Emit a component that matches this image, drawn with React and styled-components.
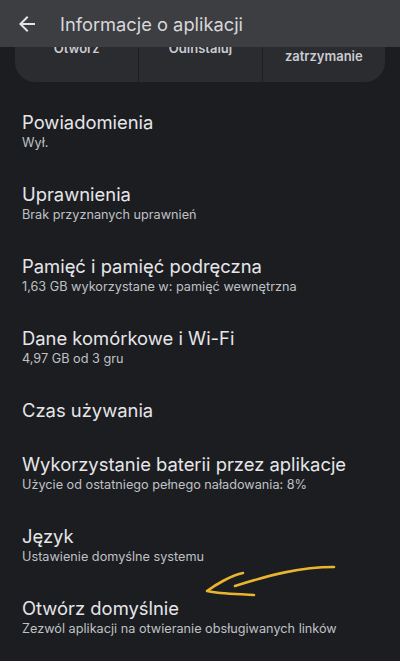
import React, { useLayoutEffect, useRef } from "react";
import styled, { createGlobalStyle } from "styled-components";

const GlobalStyle = createGlobalStyle`
  html, body {
    margin: 0;
    padding: 0;
    background: #1c1d21;
  }
  body {
    font-family: Inter, "Noto Sans", sans-serif;
    -webkit-font-smoothing: antialiased;
  }
`;

const Screen = styled.div`
  width: 400px;
  height: 661px;
  display: flex;
  flex-direction: column;
  background: #1c1d21;
  position: relative;
  overflow: hidden;
`;

const Toolbar = styled.header`
  height: 47px;
  flex: none;
  display: flex;
  align-items: center;
  gap: 21px;
  padding: 0 15px;
  background: #3d3e42;
  color: #dcdcde;
  z-index: 1;
`;

const BackButton = styled.button`
  width: 24px;
  height: 24px;
  padding: 0;
  border: 0;
  background: none;
  color: #e4e4e6;
  display: flex;
  align-items: center;
  justify-content: center;
`;

const Title = styled.h1`
  margin: 0;
  font-size: 18.3px;
  font-weight: 400;
  color: #d8d8da;
`;

const Scroller = styled.div`
  flex: 1;
  overflow: hidden;
`;

const ActionCard = styled.div`
  margin: 8px 15px 13px;
  height: 110px;
  border-radius: 20px;
  background: #2b2c30;
  display: grid;
  grid-template-columns: 1fr 1fr 1fr;
  overflow: hidden;
`;

const Action = styled.div`
  display: flex;
  flex-direction: column;
  align-items: center;
  padding: 14px 6px 0;
  border-left: ${(p) => (p.$first ? "none" : "1px solid #1e1f23")};
  color: #c9cbd0;
`;

const ActionLabel = styled.div`
  flex: 1;
  margin-top: 4px;
  display: flex;
  align-items: center;
  justify-content: center;
  text-align: center;
  white-space: pre-line;
  font-size: 13px;
  line-height: 17px;
  font-weight: 600;
`;

const List = styled.div`
  display: flex;
  flex-direction: column;
`;

const Item = styled.div`
  padding: 15px 22px;
  display: flex;
  flex-direction: column;
`;

const ItemTitle = styled.div`
  font-size: 18.4px;
  line-height: 24px;
  color: #e6e6e8;
`;

const ItemSub = styled.div`
  font-size: 12.7px;
  line-height: 18px;
  color: #bfc1c5;
`;

const Scribble = styled.svg`
  position: absolute;
  left: 0;
  top: 0;
  pointer-events: none;
`;

const items = [
  ["Powiadomienia", "Wył."],
  ["Uprawnienia", "Brak przyznanych uprawnień"],
  ["Pamięć i pamięć podręczna", "1,63 GB wykorzystane w: pamięć wewnętrzna"],
  ["Dane komórkowe i Wi-Fi", "4,97 GB od 3 gru"],
  ["Czas używania", null],
  ["Wykorzystanie baterii przez aplikacje", "Użycie od ostatniego pełnego naładowania: 8%"],
  ["Język", "Ustawienie domyślne systemu"],
  ["Otwórz domyślnie", "Zezwól aplikacji na otwieranie obsługiwanych linków"],
];

const actions = [
  ["Otwórz", "M5 5h6v2H7v10h10v-4h2v6H5V5zm9 0h5v5h-2V8.4l-6.3 6.3-1.4-1.4L15.6 7H14V5z"],
  ["Odinstaluj", "M8 4h8v2h4v2H4V6h4V4zm-2 6h12l-1 10H7L6 10z"],
  ["Wymuś\nzatrzymanie", "M12 3a9 9 0 1 1 0 18 9 9 0 0 1 0-18zm-1 4v6h2V7h-2zm0 8v2h2v-2h-2z"],
];

export default function App() {
  const scrollRef = useRef(null);

  useLayoutEffect(() => {
    if (scrollRef.current) scrollRef.current.scrollTop = 83;
  }, []);

  return (
    <Screen>
      <GlobalStyle />
      <Toolbar>
        <BackButton aria-label="Wstecz">
          <svg width="24" height="24" viewBox="0 0 24 24" fill="currentColor">
            <path d="M20 11H7.83l5.59-5.59L12 4l-8 8 8 8 1.41-1.41L7.83 13H20v-2z" />
          </svg>
        </BackButton>
        <Title>Informacje o aplikacji</Title>
      </Toolbar>
      <Scroller ref={scrollRef}>
        <ActionCard>
          {actions.map(([label, d], i) => (
            <Action key={label} $first={i === 0}>
              <svg width="24" height="24" viewBox="0 0 24 24" fill="#c9cbd0">
                <path d={d} />
              </svg>
              <ActionLabel>{label}</ActionLabel>
            </Action>
          ))}
        </ActionCard>
        <List>
          {items.map(([title, sub]) => (
            <Item key={title}>
              <ItemTitle>{title}</ItemTitle>
              {sub && <ItemSub>{sub}</ItemSub>}
            </Item>
          ))}
        </List>
        <div style={{ height: 200 }} />
      </Scroller>
      <Scribble width="400" height="661" viewBox="0 0 400 661">
        <g fill="none" stroke="#e9b52f" strokeWidth="2.6" strokeLinecap="round" strokeLinejoin="round">
          <path d="M334 567 C 300 567, 270 575, 235 586" />
          <path d="M243 573 C 232 575, 215 585, 207 591 C 220 594, 240 594, 254 595" />
        </g>
      </Scribble>
    </Screen>
  );
}
